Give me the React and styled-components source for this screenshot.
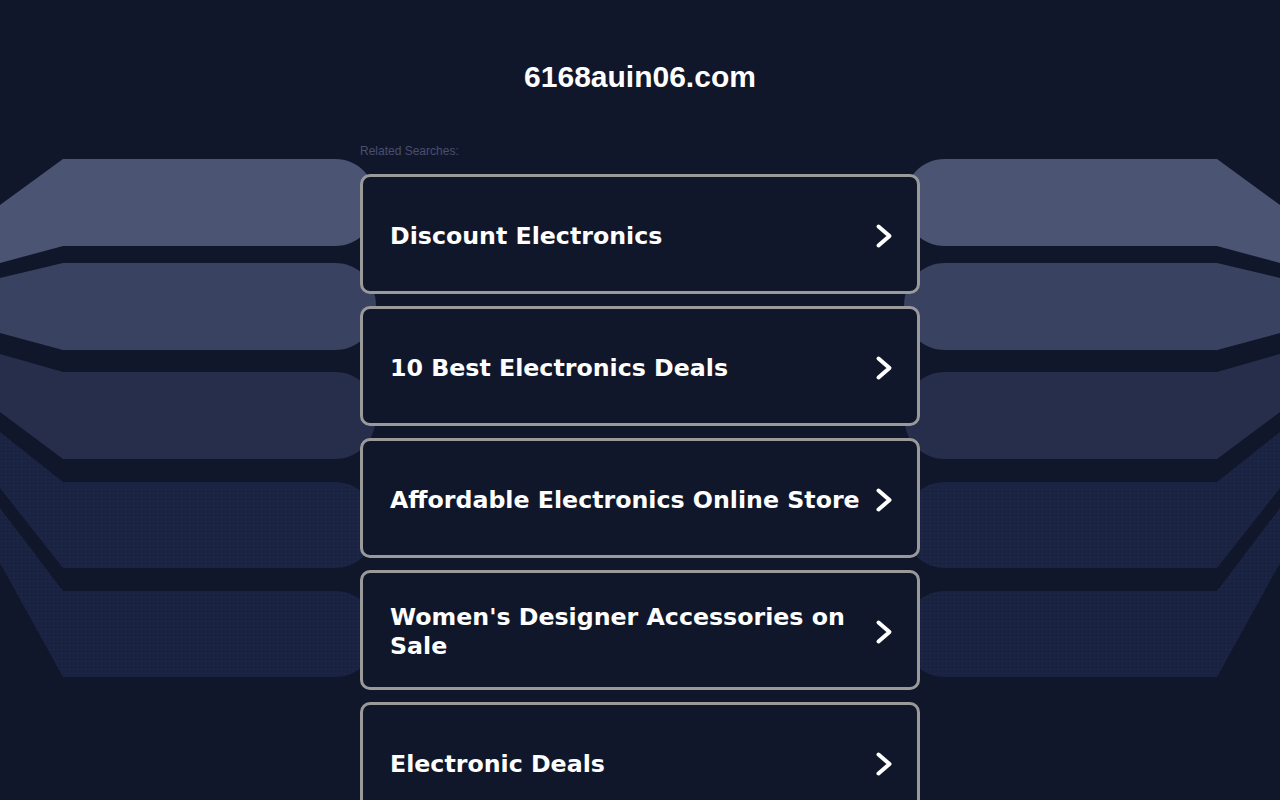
import React from "react";
import styled, { createGlobalStyle } from "styled-components";

const searches = [
	"Discount Electronics",
	"10 Best Electronics Deals",
	"Affordable Electronics Online Store",
	"Women's Designer Accessories on Sale",
	"Electronic Deals",
];

// left-side bands: [flat top, flat bottom, top at x=0, bottom at x=0, colour, textured]
const bands = [
	[159, 246, 205, 263, "#4b5573", false],
	[263, 350, 278, 333, "#3a4261", false],
	[372, 459, 354, 412, "#262e4b", false],
	[482, 568, 432, 488, "#1b2342", true],
	[591, 677, 508, 563, "#1a2241", true],
];

const bandPath = ([top, bottom, edgeTop, edgeBottom]) => {
	const mid = (top + bottom) / 2;
	return `M0 ${edgeTop} L63 ${top} L335 ${top} C358 ${top} 376 ${top + 18} 376 ${mid} C376 ${bottom - 18} 358 ${bottom} 335 ${bottom} L63 ${bottom} L0 ${edgeBottom} Z`;
};

const Backdrop = () => (
	<BackdropSvg viewBox="0 0 1280 800" preserveAspectRatio="none">
		<defs>
			<pattern id="dots" width="4" height="4" patternUnits="userSpaceOnUse">
				<rect x="1" y="1" width="1" height="1" fill="#2a3358" opacity="0.7" />
			</pattern>
		</defs>
		{bands.map((band, i) => (
			<g key={i}>
				<path d={bandPath(band)} fill={band[4]} />
				{band[5] && <path d={bandPath(band)} fill="url(#dots)" />}
				<g transform="translate(1280 0) scale(-1 1)">
					<path d={bandPath(band)} fill={band[4]} />
					{band[5] && <path d={bandPath(band)} fill="url(#dots)" />}
				</g>
			</g>
		))}
	</BackdropSvg>
);

const Chevron = () => (
	<ChevronSvg viewBox="0 0 18 26">
		<polyline
			points="3.5,3.5 14.5,13 3.5,22.5"
			fill="none"
			stroke="#ffffff"
			strokeWidth="4"
			strokeLinecap="round"
			strokeLinejoin="round"
		/>
	</ChevronSvg>
);

const App = () => {
	return (
		<Page>
			<GlobalStyle />
			<Backdrop />
			<Content>
				<Title>6168auin06.com</Title>
				<Results>
					<Label>Related Searches:</Label>
					<List>
						{searches.map((text) => (
							<Card key={text} href="#">
								<CardText>{text}</CardText>
								<Chevron />
							</Card>
						))}
					</List>
				</Results>
			</Content>
		</Page>
	);
};

const GlobalStyle = createGlobalStyle`
	html, body {
		margin: 0;
		padding: 0;
		background: #11172b;
	}
	* {
		box-sizing: border-box;
	}
`;

const Page = styled.div`
	position: relative;
	min-height: 100vh;
	overflow: hidden;
	background: #11172b;
	font-family: "Liberation Sans", Arial, sans-serif;
`;

const BackdropSvg = styled.svg`
	position: absolute;
	top: 0;
	left: 0;
	width: 1280px;
	height: 800px;
	pointer-events: none;
`;

const Content = styled.div`
	position: relative;
	display: flex;
	flex-direction: column;
	align-items: center;
`;

const Title = styled.h1`
	margin: 0;
	padding-top: 59px;
	font-size: 30px;
	line-height: 36px;
	font-weight: bold;
	color: #ffffff;
`;

const Results = styled.div`
	width: 560px;
	margin-top: 49px;
`;

const Label = styled.div`
	font-size: 12px;
	line-height: 14px;
	color: #48506e;
	margin-bottom: 16px;
`;

const List = styled.div`
	display: flex;
	flex-direction: column;
	gap: 12px;
`;

const Card = styled.a`
	display: flex;
	align-items: center;
	justify-content: space-between;
	gap: 9px;
	height: 120px;
	padding: 4px 24px 0 27px;
	border: 3px solid #9a9a9a;
	border-radius: 10px;
	background: #11172b;
	text-decoration: none;
`;

const CardText = styled.span`
	font-family: "DejaVu Sans", Verdana, sans-serif;
	font-weight: bold;
	font-size: 23.7px;
	line-height: 29px;
	color: #ffffff;
`;

const ChevronSvg = styled.svg`
	flex: none;
	width: 18px;
	height: 26px;
`;

export default App;
